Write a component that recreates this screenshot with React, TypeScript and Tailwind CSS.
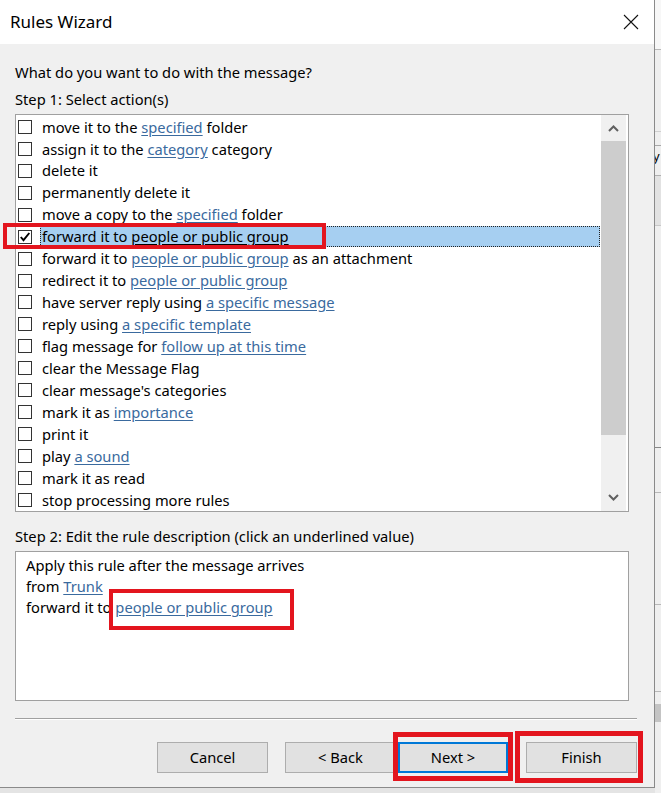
import React from "react";

const FONT = { fontFamily: '"Noto Sans", "Open Sans", sans-serif' };

type Part = string | { link: string };
const rows: Part[][] = [
  ["move it to the ", { link: "specified" }, " folder"],
  ["assign it to the ", { link: "category" }, " category"],
  ["delete it"],
  ["permanently delete it"],
  ["move a copy to the ", { link: "specified" }, " folder"],
  ["forward it to ", { link: "people or public group" }],
  ["forward it to ", { link: "people or public group" }, " as an attachment"],
  ["redirect it to ", { link: "people or public group" }],
  ["have server reply using ", { link: "a specific message" }],
  ["reply using ", { link: "a specific template" }],
  ["flag message for ", { link: "follow up at this time" }],
  ["clear the Message Flag"],
  ["clear message's categories"],
  ["mark it as ", { link: "importance" }],
  ["print it"],
  ["play ", { link: "a sound" }],
  ["mark it as read"],
  ["stop processing more rules"],
];

function Checkbox({ checked }: { checked?: boolean }) {
  return (
    <span className="w-[14px] h-[14px] border border-[#333333] bg-white flex items-center justify-center shrink-0">
      {checked && (
        <svg width="12" height="12" viewBox="0 0 12 12">
          <path d="M1.8 6 L4.5 9.2 L10.3 2" fill="none" stroke="#000" strokeWidth="1.9" />
        </svg>
      )}
    </span>
  );
}

function Row({ parts, selected }: { parts: Part[]; selected?: boolean }) {
  return (
    <div className="h-[22px] flex items-center pl-[2px]">
      <Checkbox checked={selected} />
      <div
        className={
          selected
            ? "ml-[8px] flex-1 h-[21px] flex items-center bg-[#a6cff1] border border-dotted border-[#222] pl-px"
            : "ml-[8px] flex-1 h-[21px] flex items-center pl-[2px]"
        }
      >
        <span className="whitespace-pre text-[14.7px] text-black leading-none">
          {parts.map((p, i) =>
            typeof p === "string" ? (
              <span key={i}>{p}</span>
            ) : (
              <span
                key={i}
                className={selected ? "underline underline-offset-2 text-black" : "underline underline-offset-2 text-[#3a6a9e]"}
              >
                {p.link}
              </span>
            )
          )}
        </span>
      </div>
    </div>
  );
}

function Button({ label, focused }: { label: string; focused?: boolean }) {
  return (
    <div
      className={
        focused
          ? "w-[110px] h-[31px] bg-[#e1e1e1] border-2 border-[#0078d7] flex items-center justify-center text-[14.7px] text-black"
          : "w-[111px] h-[31px] bg-[#e1e1e1] border border-[#adadad] flex items-center justify-center text-[14.7px] text-black"
      }
    >
      {label}
    </div>
  );
}

export default function App() {
  return (
    <div className="w-[661px] h-[793px] flex bg-[#e4e4e4] overflow-hidden" style={FONT}>
      {/* Dialog */}
      <div className="w-[655px] h-[788px] shrink-0 flex flex-col bg-[#f0f0f0] border-r border-b border-[#8a8a8a] relative">
        {/* Title bar */}
        <div className="h-[44px] bg-white flex items-center justify-between pl-[10px] pr-[15px] shrink-0">
          <span className="text-[17px] text-black">Rules Wizard</span>
          <svg width="16" height="16" viewBox="0 0 16 16">
            <path d="M1 1 L15 15 M15 1 L1 15" stroke="#111" strokeWidth="1.1" />
          </svg>
        </div>

        <div className="flex flex-col pl-[15px] pr-[25px]">
          <div className="mt-[18px] h-[20px] flex items-center text-[14.7px] text-black">
            What do you want to do with the message?
          </div>
          <div className="mt-[7px] h-[20px] flex items-center text-[14.7px] text-black">Step 1: Select action(s)</div>

          {/* Actions list */}
          <div className="mt-[5px] h-[398px] border border-[#a0a0a0] bg-white flex">
            <div className="flex-1 flex flex-col pt-px">
              {rows.map((r, i) => (
                <Row key={i} parts={r} selected={i === 5} />
              ))}
            </div>
            <div className="w-[25px] ml-px mr-[2px] flex flex-col bg-[#f0f0f0]">
              <div className="h-[26px] flex items-center justify-center">
                <svg width="11" height="7" viewBox="0 0 11 7">
                  <path d="M1 6 L5.5 1.5 L10 6" fill="none" stroke="#606060" strokeWidth="2" />
                </svg>
              </div>
              <div className="h-[294px] bg-[#cdcdcd]" />
              <div className="flex-1 flex items-end justify-center pb-[10px]">
                <svg width="11" height="7" viewBox="0 0 11 7">
                  <path d="M1 1 L5.5 5.5 L10 1" fill="none" stroke="#606060" strokeWidth="2" />
                </svg>
              </div>
            </div>
          </div>

          <div className="mt-[14px] h-[20px] flex items-center text-[14.7px] text-black">
            Step 2: Edit the rule description (click an underlined value)
          </div>

          {/* Description */}
          <div className="mt-[5px] h-[150px] border border-[#a0a0a0] bg-white pl-[10px] pt-[3px] text-[14.7px] text-black">
            <div className="h-[21px] flex items-center">Apply this rule after the message arrives</div>
            <div className="h-[21px] flex items-center whitespace-pre">
              from <span className="underline underline-offset-2 text-[#3a6a9e]">Trunk</span>
            </div>
            <div className="h-[21px] flex items-center whitespace-pre">
              forward it to <span className="underline underline-offset-2 text-[#3a6a9e]">people or public group</span>
            </div>
          </div>

          <div className="mt-[17px] mr-[-8px] h-[2px] border-t border-[#a0a0a0] border-b border-b-white" />

          {/* Buttons */}
          <div className="mt-[22px] mr-[-8px] flex justify-end">
            <Button label="Cancel" />
            <div className="w-[17px]" />
            <Button label="< Back" />
            <div className="w-[2px]" />
            <Button label="Next >" focused />
            <div className="w-[18px]" />
            <Button label="Finish" />
          </div>
        </div>

        {/* Red annotation boxes */}
        <div className="absolute left-[3px] top-[223px] w-[323px] h-[26px] border-[4px] border-[#e3151e]" />
        <div className="absolute left-[109px] top-[589px] w-[185px] h-[41px] border-[4px] border-[#e3151e]" />
        <div className="absolute left-[393px] top-[732px] w-[120px] h-[49px] border-[5px] border-[#e3151e]" />
        <div className="absolute left-[515px] top-[731px] w-[128px] h-[52px] border-[5px] border-[#e3151e]" />
      </div>

      {/* Background window strip */}
      <div className="flex-1 flex flex-col bg-[#efefef]">
        <div className="h-[50px] border-b border-[#b8b8b8] bg-[#f7f7f7]" />
        <div className="h-[82px] border-b border-[#d0d0d0]" />
        <div className="h-[14px] border-b border-[#a8a8a8]" />
        <div className="h-[30px] border-b border-[#b0b0b0] text-[13px] leading-[20px] -ml-[2px]">y</div>
        <div className="h-[50px] border-b border-[#c8c8c8] bg-[#e2e2e2]" />
        <div className="h-[222px] border-b border-[#888]" />
        <div className="h-[45px] border-b border-[#b8b8b8]" />
        <div className="h-[112px] border-b border-[#b8b8b8]" />
        <div className="h-[87px] border-b border-[#b8b8b8]" />
        <div className="h-[12px]" />
        <div className="h-[18px] bg-[#c4c4c4]" />
        <div className="flex-1" />
      </div>
    </div>
  );
}
